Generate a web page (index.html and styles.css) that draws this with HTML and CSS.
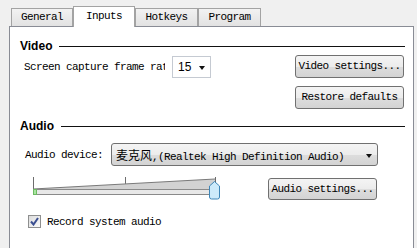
FILE: index.html
```html
<!DOCTYPE html>
<html lang="en">
<head>
    <meta charset="UTF-8">
    <title>Settings - Inputs</title>
    <link rel="stylesheet" href="styles.css">
</head>
<body>
    <div class="tabs">
        <div class="tab">General</div>
        <div class="tab active">Inputs</div>
        <div class="tab wide">Hotkeys</div>
        <div class="tab wide">Program</div>
    </div>

    <div class="panel">
        <div class="group-title"><span>Video</span><div class="rule"></div></div>
        <div class="video-body">
            <div class="field">
                <span class="label clip">Screen capture frame rate</span>
                <div class="select">15<span class="arrow"></span></div>
            </div>
            <div class="btn-col">
                <div class="btn">Video settings...</div>
                <div class="btn">Restore defaults</div>
            </div>
        </div>

        <div class="group-title audio-title"><span>Audio</span><div class="rule"></div></div>
        <div class="device-row">
            <span class="label">Audio device:</span>
            <div class="combo"><span class="cjk">麦克风</span>,(Realtek High Definition Audio)<span class="arrow"></span></div>
        </div>
        <div class="slider-row">
            <svg class="slider" width="193" height="27" viewBox="0 0 193 27">
                <line x1="3.5" y1="3" x2="3.5" y2="15" stroke="#6d6d6d"/>
                <line x1="95.5" y1="3" x2="95.5" y2="15" stroke="#6d6d6d"/>
                <line x1="185.5" y1="3" x2="185.5" y2="15" stroke="#6d6d6d"/>
                <polygon points="3,15 185,5 185,15" fill="#d2d2d2"/>
                <line x1="3" y1="15" x2="185" y2="5" stroke="#7a7a7a"/>
                <rect x="3.5" y="15.5" width="182" height="5" fill="#e8e8e8" stroke="#8a8a8a"/>
                <rect x="3.5" y="15.5" width="3" height="5" fill="#a8e6a0" stroke="#6dba62"/>
                <path d="M179.5 12 L184.5 7.5 L189.5 12 L189.5 23 Q189.5 25 187.5 25 L181.5 25 Q179.5 25 179.5 23 Z" fill="#cdeafa" stroke="#3f86b8"/>
            </svg>
            <div class="btn">Audio settings...</div>
        </div>
        <div class="check-row">
            <span class="check">
                <svg width="9" height="9" viewBox="0 0 9 9"><path d="M1 4.5 L3.5 7.5 L8 1" fill="none" stroke="#3b4f91" stroke-width="2"/></svg>
            </span>
            <span class="label">Record system audio</span>
        </div>
    </div>
</body>
</html>
```

FILE: styles.css
```css
body {
    margin: 0;
    padding: 0;
    background-color: #f0f0f0;
    font-family: "Liberation Mono", "DejaVu Sans Mono", monospace;
    font-size: 11px;
    letter-spacing: -0.6px;
    color: #000;
    height: 248px;
    overflow: hidden;
}

/* tab strip */
.tabs {
    display: flex;
    align-items: flex-end;
    height: 27px;
    padding-left: 11px;
    margin-bottom: -1px;
    position: relative;
    z-index: 1;
}

.tab {
    box-sizing: border-box;
    width: 62px;
    height: 18px;
    margin-bottom: 1px;
    border: 1px solid #a3a3a3;
    border-bottom: none;
    background: linear-gradient(#f2f2f2, #e2e2e2);
    text-align: center;
    line-height: 17px;
}

.tab.wide {
    width: 63px;
}

.tab.active {
    height: 21px;
    margin-bottom: 0;
    background: #fff;
    line-height: 18px;
}

/* page body */
.panel {
    box-sizing: border-box;
    width: 405px;
    height: 230px;
    margin-left: 9px;
    padding: 12px 8px 0 10px;
    border: 1px solid #898c95;
    background-color: #fff;
}

.group-title {
    display: flex;
    align-items: center;
    height: 14px;
    font-family: "Liberation Sans", Arial, sans-serif;
    font-weight: bold;
    font-size: 12px;
    letter-spacing: 0;
}

.rule {
    flex: 1;
    margin-left: 7px;
    border-top: 1px solid #111;
}

.audio-title {
    margin-top: 10px;
}

.video-body {
    display: flex;
    justify-content: space-between;
    margin-top: 2px;
    padding-left: 4px;
    padding-right: 1px;
}

.field {
    display: flex;
    align-items: center;
    height: 22px;
    margin-top: 1px;
}

.label {
    white-space: nowrap;
}

.clip {
    display: inline-block;
    width: 141px;
    margin-right: 3px;
    overflow: hidden;
}

.select {
    box-sizing: border-box;
    position: relative;
    width: 39px;
    height: 22px;
    margin-left: 4px;
    padding-left: 5px;
    border: 1px solid #c5cad2;
    font-family: "Liberation Sans", Arial, sans-serif;
    font-size: 12px;
    letter-spacing: 0;
    line-height: 20px;
}

.arrow {
    position: absolute;
    right: 5px;
    top: 9px;
    border-left: 3.5px solid transparent;
    border-right: 3.5px solid transparent;
    border-top: 4px solid #111;
}

.btn-col {
    display: flex;
    flex-direction: column;
    gap: 8px;
}

.btn {
    box-sizing: border-box;
    width: 109px;
    height: 23px;
    border: 1px solid #707070;
    border-radius: 3px;
    background: linear-gradient(#f4f4f4 0%, #ececec 50%, #dddddd 51%, #d3d3d3 100%);
    text-align: center;
    line-height: 21px;
    white-space: nowrap;
}

.device-row {
    display: flex;
    align-items: center;
    margin-top: 10px;
    padding-left: 5px;
}

.combo {
    box-sizing: border-box;
    position: relative;
    width: 267px;
    height: 23px;
    margin-left: 8px;
    padding-left: 4px;
    border: 1px solid #707070;
    border-radius: 3px;
    background: linear-gradient(#f4f4f4 0%, #ececec 50%, #dddddd 51%, #d3d3d3 100%);
    line-height: 21px;
    white-space: nowrap;
}

.combo .arrow {
    right: 5px;
    top: 10px;
}

.cjk {
    font-family: "Noto Sans CJK SC", sans-serif;
    font-size: 12px;
    letter-spacing: 0;
}

.slider-row {
    display: flex;
    align-items: flex-start;
    margin-top: 8px;
    padding-left: 10px;
}

.slider {
    display: block;
}

.slider-row .btn {
    height: 22px;
    line-height: 20px;
    margin-top: 4px;
    margin-left: auto;
    margin-right: 28px;
}

.check-row {
    display: flex;
    align-items: center;
    margin-top: 14px;
    padding-left: 8px;
    gap: 6px;
}

.check {
    box-sizing: border-box;
    display: flex;
    align-items: center;
    justify-content: center;
    width: 13px;
    height: 13px;
    border: 1px solid #8e8f8f;
    background: linear-gradient(135deg, #dcdcdc, #fafafa);
}
```
